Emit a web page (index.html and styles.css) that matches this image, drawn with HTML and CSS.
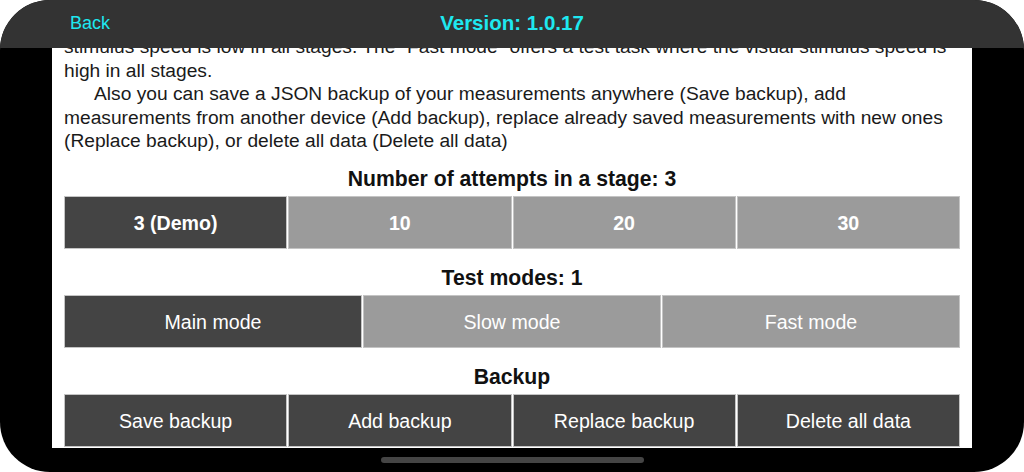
FILE: index.html
```html
<!DOCTYPE html>
<html>
<head>
<meta charset="utf-8">
<link rel="stylesheet" href="styles.css">
</head>
<body>
<div class="device">
  <header class="topbar">
    <div class="back">Back</div>
    <div class="title">Version: 1.0.17</div>
    <div></div>
  </header>
  <main class="content">
    <p class="info">stimulus speed is low in all stages. The “Fast mode” offers a test task where the visual stimulus speed is high in all stages.<br><span class="indent"></span>Also you can save a JSON backup of your measurements anywhere (Save backup), add measurements from another device (Add backup), replace already saved measurements with new ones (Replace backup), or delete all data (Delete all data)</p>
    <h2 class="heading">Number of attempts in a stage: 3</h2>
    <div class="seg four">
      <div class="btn dark bold">3 (Demo)</div>
      <div class="btn light bold">10</div>
      <div class="btn light bold">20</div>
      <div class="btn light bold">30</div>
    </div>
    <h2 class="heading">Test modes: 1</h2>
    <div class="seg three">
      <div class="btn dark">Main mode</div>
      <div class="btn light">Slow mode</div>
      <div class="btn light">Fast mode</div>
    </div>
    <h2 class="heading">Backup</h2>
    <div class="seg four">
      <div class="btn dark">Save backup</div>
      <div class="btn dark">Add backup</div>
      <div class="btn dark">Replace backup</div>
      <div class="btn dark">Delete all data</div>
    </div>
  </main>
  <footer class="home"><div class="indicator"></div></footer>
</div>
</body>
</html>
```

FILE: styles.css
```css
html, body {
  margin: 0;
  padding: 0;
  background: #ffffff;
}
body {
  font-family: "Liberation Sans", Arial, sans-serif;
}
.device {
  width: 1024px;
  height: 472px;
  background: #000;
  border-radius: 50px;
  overflow: hidden;
  display: flex;
  flex-direction: column;
}
.topbar {
  height: 48px;
  flex: none;
  background: #333333;
  display: grid;
  grid-template-columns: 1fr auto 1fr;
  align-items: center;
  position: relative;
  z-index: 2;
}
.back {
  padding-left: 70px;
  font-size: 18px;
  color: #1ee8f0;
  padding-bottom: 1px;
}
.title {
  font-size: 20.5px;
  font-weight: bold;
  color: #1ee8f0;
  padding-bottom: 2px;
}
.content {
  height: 400px;
  flex: none;
  margin: 0 52px;
  background: #fff;
  overflow: hidden;
  padding: 0 12px;
}
.info {
  margin: -13px 0 0;
  font-size: 19.2px;
  line-height: 23.5px;
  color: #1a1a1a;
}
.indent {
  display: inline-block;
  width: 30px;
}
.heading {
  margin: 14px 0 5px;
  font-size: 21.2px;
  line-height: 24px;
  font-weight: bold;
  text-align: center;
  color: #111;
}
.seg {
  display: grid;
  gap: 1px;
  height: 53px;
}
.seg + .heading {
  margin-top: 17px;
}
.four { grid-template-columns: repeat(4, 1fr); }
.three { grid-template-columns: repeat(3, 1fr); }
.btn {
  border: 1px solid #c4c4c4;
  display: flex;
  align-items: center;
  justify-content: center;
  color: #fff;
  font-size: 19.6px;
  padding-top: 2px;
  box-sizing: border-box;
}
.bold { font-weight: bold; }
.dark { background: #444444; }
.light { background: #9b9b9b; }
.home {
  flex: 1;
  display: flex;
  justify-content: center;
  padding-top: 9px;
}
.indicator {
  width: 263px;
  height: 6px;
  border-radius: 3px;
  background: #454545;
}
```
